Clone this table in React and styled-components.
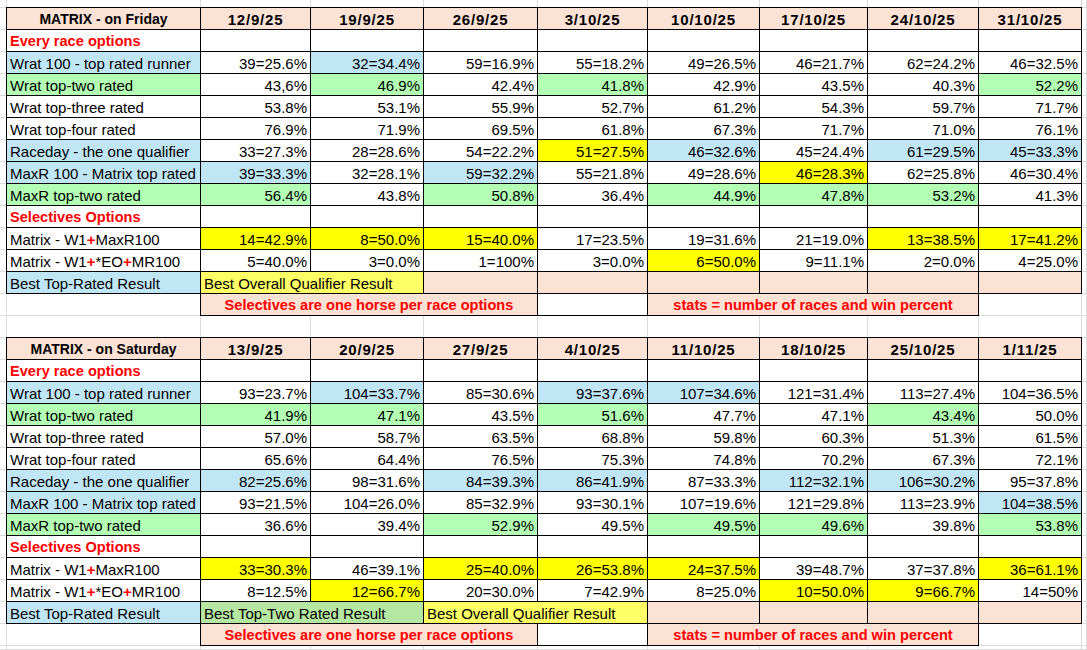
import React from 'react';
import styled, { createGlobalStyle } from 'styled-components';

const GlobalStyle = createGlobalStyle`
  html, body { margin: 0; padding: 0; background: #ffffff; }
  body { font-family: "Liberation Sans", Arial, sans-serif; }
`;

const COLS = [7, 194, 110, 113, 114, 110, 112, 108, 111, 103];

const FILL = {
  w: '#ffffff',
  b: '#c0e6f5',
  g: '#b3ffb3',
  y: '#ffff00',
  l: '#ffff66',
  p: '#fbe2d5',
  m: '#b5e6a2',
};

const Sheet = styled.div`
  display: grid;
  grid-template-columns: ${COLS.map((c) => c + 'px').join(' ')} 1fr;
  grid-template-rows: 8px repeat(29, 22px) 1fr;
  width: 100vw;
  height: 100vh;
  overflow: hidden;
  font-family: "Liberation Sans", Arial, sans-serif;
  font-size: 15px;
  color: #000;
`;

const Gridline = styled.div`
  box-sizing: border-box;
  border-right: 1px solid #dcdcdc;
  border-bottom: 1px solid #dcdcdc;
  grid-column: span ${(p) => p.$span || 1};
`;

const Cell = styled.div`
  box-sizing: border-box;
  margin: -1px 0 0 -1px;
  border: 1px solid #000;
  background: ${(p) => FILL[p.$fill || 'w']};
  grid-column: span ${(p) => p.$span || 1};
  display: flex;
  align-items: center;
  justify-content: ${(p) =>
    p.$align === 'right' ? 'flex-end' : p.$align === 'center' ? 'center' : 'flex-start'};
  padding: 1px 3px 0 3px;
  white-space: nowrap;
  overflow: hidden;
  font-size: 15px;
  color: #000;
`;

const Heading = styled.span`
  font-weight: 700;
  font-size: ${(p) => (p.$date ? '15px' : '14px')};
  letter-spacing: ${(p) => (p.$date ? '0.8px' : '0')};
`;

const RedText = styled.span`
  font-weight: 700;
  font-size: 14.6px;
  color: #ff0000;
`;

const RedPlus = styled.span`
  color: #ff0000;
  font-weight: 700;
`;

const friday = {
  title: 'MATRIX - on Friday',
  dates: ['12/9/25', '19/9/25', '26/9/25', '3/10/25', '10/10/25', '17/10/25', '24/10/25', '31/10/25'],
  every: [
    ['Wrat 100 - top rated runner', 'b', [['39=25.6%'], ['32=34.4%', 'b'], ['59=16.9%'], ['55=18.2%'], ['49=26.5%'], ['46=21.7%'], ['62=24.2%'], ['46=32.5%']]],
    ['Wrat top-two rated', 'g', [['43,6%'], ['46.9%', 'g'], ['42.4%'], ['41.8%', 'g'], ['42.9%'], ['43.5%'], ['40.3%'], ['52.2%', 'g']]],
    ['Wrat top-three rated', 'w', [['53.8%'], ['53.1%'], ['55.9%'], ['52.7%'], ['61.2%'], ['54.3%'], ['59.7%'], ['71.7%']]],
    ['Wrat top-four rated', 'w', [['76.9%'], ['71.9%'], ['69.5%'], ['61.8%'], ['67.3%'], ['71.7%'], ['71.0%'], ['76.1%']]],
    ['Raceday - the one qualifier', 'b', [['33=27.3%'], ['28=28.6%'], ['54=22.2%'], ['51=27.5%', 'y'], ['46=32.6%', 'b'], ['45=24.4%'], ['61=29.5%', 'b'], ['45=33.3%', 'b']]],
    ['MaxR 100 - Matrix top rated', 'b', [['39=33.3%', 'b'], ['32=28.1%'], ['59=32.2%', 'b'], ['55=21.8%'], ['49=28.6%'], ['46=28.3%', 'y'], ['62=25.8%'], ['46=30.4%']]],
    ['MaxR top-two rated', 'g', [['56.4%', 'g'], ['43.8%'], ['50.8%', 'g'], ['36.4%'], ['44.9%', 'g'], ['47.8%', 'g'], ['53.2%', 'g'], ['41.3%']]],
  ],
  selectives: [
    ['Matrix - W1+MaxR100', 'w', [['14=42.9%', 'y'], ['8=50.0%', 'y'], ['15=40.0%', 'y'], ['17=23.5%'], ['19=31.6%'], ['21=19.0%'], ['13=38.5%', 'y'], ['17=41.2%', 'y']]],
    ['Matrix - W1+*EO+MR100', 'w', [['5=40.0%'], ['3=0.0%'], ['1=100%'], ['3=0.0%'], ['6=50.0%', 'y'], ['9=11.1%'], ['2=0.0%'], ['4=25.0%']]],
  ],
  best: [
    ['Best Overall Qualifier Result', 'l', 2],
  ],
};

const saturday = {
  title: 'MATRIX - on Saturday',
  dates: ['13/9/25', '20/9/25', '27/9/25', '4/10/25', '11/10/25', '18/10/25', '25/10/25', '1/11/25'],
  every: [
    ['Wrat 100 - top rated runner', 'b', [['93=23.7%'], ['104=33.7%', 'b'], ['85=30.6%'], ['93=37.6%', 'b'], ['107=34.6%', 'b'], ['121=31.4%'], ['113=27.4%'], ['104=36.5%']]],
    ['Wrat top-two rated', 'g', [['41.9%', 'g'], ['47.1%', 'g'], ['43.5%'], ['51.6%', 'g'], ['47.7%'], ['47.1%'], ['43.4%', 'g'], ['50.0%']]],
    ['Wrat top-three rated', 'w', [['57.0%'], ['58.7%'], ['63.5%'], ['68.8%'], ['59.8%'], ['60.3%'], ['51.3%'], ['61.5%']]],
    ['Wrat top-four rated', 'w', [['65.6%'], ['64.4%'], ['76.5%'], ['75.3%'], ['74.8%'], ['70.2%'], ['67.3%'], ['72.1%']]],
    ['Raceday - the one qualifier', 'b', [['82=25.6%', 'b'], ['98=31.6%'], ['84=39.3%', 'b'], ['86=41.9%', 'b'], ['87=33.3%'], ['112=32.1%', 'b'], ['106=30.2%', 'b'], ['95=37.8%']]],
    ['MaxR 100 - Matrix top rated', 'b', [['93=21.5%'], ['104=26.0%'], ['85=32.9%'], ['93=30.1%'], ['107=19.6%'], ['121=29.8%'], ['113=23.9%'], ['104=38.5%', 'b']]],
    ['MaxR top-two rated', 'g', [['36.6%'], ['39.4%'], ['52.9%', 'g'], ['49.5%'], ['49.5%', 'g'], ['49.6%', 'g'], ['39.8%'], ['53.8%', 'g']]],
  ],
  selectives: [
    ['Matrix - W1+MaxR100', 'w', [['33=30.3%', 'y'], ['46=39.1%'], ['25=40.0%', 'y'], ['26=53.8%', 'y'], ['24=37.5%', 'y'], ['39=48.7%'], ['37=37.8%'], ['36=61.1%', 'y']]],
    ['Matrix - W1+*EO+MR100', 'w', [['8=12.5%'], ['12=66.7%', 'y'], ['20=30.0%'], ['7=42.9%'], ['8=25.0%'], ['10=50.0%', 'y'], ['9=66.7%', 'y'], ['14=50%']]],
  ],
  best: [
    ['Best Top-Two Rated Result', 'm', 2],
    ['Best Overall Qualifier Result', 'l', 2],
  ],
};

function Label({ text }) {
  const parts = text.split('+');
  return (
    <span>
      {parts.map((part, i) => (
        <React.Fragment key={i}>
          {i > 0 && <RedPlus>+</RedPlus>}
          {part}
        </React.Fragment>
      ))}
    </span>
  );
}

function FillerRow({ id }) {
  return COLS.concat([0]).map((_, i) => <Gridline key={id + '-' + i} />);
}

function DataRow({ row }) {
  const [label, fill, values] = row;
  return (
    <>
      <Gridline />
      <Cell $fill={fill}>
        <Label text={label} />
      </Cell>
      {values.map(([v, f], i) => (
        <Cell key={i} $fill={f || 'w'} $align="right">
          {v}
        </Cell>
      ))}
      <Gridline />
    </>
  );
}

function SectionRow({ title }) {
  return (
    <>
      <Gridline />
      <Cell>
        <RedText>{title}</RedText>
      </Cell>
      {Array.from({ length: 8 }).map((_, i) => (
        <Cell key={i} />
      ))}
      <Gridline />
    </>
  );
}

function Table({ data }) {
  const used = data.best.reduce((s, b) => s + b[2], 0);
  return (
    <>
      <Gridline />
      <Cell $fill="p" $align="center">
        <Heading>{data.title}</Heading>
      </Cell>
      {data.dates.map((d) => (
        <Cell key={d} $fill="p" $align="center">
          <Heading $date>{d}</Heading>
        </Cell>
      ))}
      <Gridline />

      <SectionRow title="Every race options" />
      {data.every.map((r) => (
        <DataRow key={r[0]} row={r} />
      ))}

      <SectionRow title="Selectives Options" />
      {data.selectives.map((r) => (
        <DataRow key={r[0]} row={r} />
      ))}

      <Gridline />
      <Cell $fill="b">Best Top-Rated Result</Cell>
      {data.best.map(([t, f, s]) => (
        <Cell key={t} $fill={f} $span={s}>
          {t}
        </Cell>
      ))}
      {Array.from({ length: 8 - used }).map((_, i) => (
        <Cell key={i} $fill="p" />
      ))}
      <Gridline />

      <Gridline />
      <Gridline />
      <Cell $fill="p" $span={3} $align="center">
        <RedText>Selectives are one horse per race options</RedText>
      </Cell>
      <Cell />
      <Cell $fill="p" $span={3} $align="center">
        <RedText>stats = number of races and win percent</RedText>
      </Cell>
      <Gridline />
      <Gridline />
    </>
  );
}

export default function App() {
  return (
    <>
      <GlobalStyle />
      <Sheet>
        <FillerRow id="top" />
        <Table data={friday} />
        <FillerRow id="gap" />
        <Table data={saturday} />
        <FillerRow id="bottom" />
      </Sheet>
    </>
  );
}
